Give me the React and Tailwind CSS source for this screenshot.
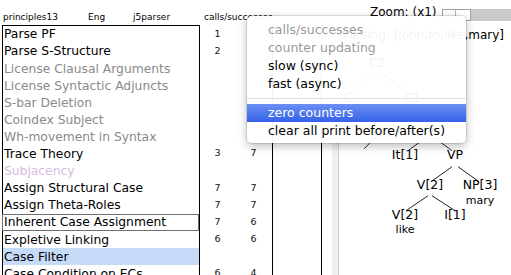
const rows = [
  { t: 'Parse PF', cls: 'text-black', a: '1', b: '' },
  { t: 'Parse S-Structure', cls: 'text-black', a: '2', b: '' },
  { t: 'License Clausal Arguments', cls: 'text-[#8a8a8a]', a: '', b: '' },
  { t: 'License Syntactic Adjuncts', cls: 'text-[#8a8a8a]', a: '', b: '' },
  { t: 'S-bar Deletion', cls: 'text-[#8a8a8a]', a: '', b: '' },
  { t: 'Coindex Subject', cls: 'text-[#8a8a8a]', a: '', b: '' },
  { t: 'Wh-movement in Syntax', cls: 'text-[#8a8a8a]', a: '', b: '' },
  { t: 'Trace Theory', cls: 'text-black', a: '3', b: '7' },
  { t: 'Subjacency', cls: 'text-[#d7bbdf]', a: '', b: '' },
  { t: 'Assign Structural Case', cls: 'text-black', a: '7', b: '7' },
  { t: 'Assign Theta-Roles', cls: 'text-black', a: '7', b: '7' },
  { t: 'Inherent Case Assignment', cls: 'text-black -ml-px border border-[#707070]', a: '7', b: '6' },
  { t: 'Expletive Linking', cls: 'text-black', a: '6', b: '6' },
  { t: 'Case Filter', cls: 'text-black bg-[#c6dbf8]', a: '', b: '' },
  { t: 'Case Condition on ECs', cls: 'text-black', a: '6', b: '4' },
];

// tree labels, canvas coords (centre)
const nodes = [
  { t: 'It[1]', cls: 'left-[66px] top-[130px] text-[12.5px]' },
  { t: 'VP', cls: 'left-[116px] top-[130px] text-[12.5px]' },
  { t: 'V[2]', cls: 'left-[91px] top-[160px] text-[12.5px]' },
  { t: 'NP[3]', cls: 'left-[141px] top-[160px] text-[12.5px]' },
  { t: 'mary', cls: 'left-[141px] top-[175px] text-[11px]' },
  { t: 'V[2]', cls: 'left-[66px] top-[190px] text-[12.5px]' },
  { t: 'like', cls: 'left-[66px] top-[204px] text-[11px]' },
  { t: 'I[1]', cls: 'left-[116px] top-[190px] text-[12.5px]' },
  // mostly hidden behind the menu
  { t: 'C2', cls: 'left-[38px] top-[38px] text-[12.5px]' },
  { t: 'C', cls: 'left-[9px] top-[73px] text-[12.5px]' },
  { t: 'C1', cls: 'left-[73px] top-[73px] text-[12.5px]' },
  { t: 'I2', cls: 'left-[91px] top-[100px] text-[12.5px]' },
];

const edges = [
  [34, 45, 11, 65], [44, 45, 69, 65],
  [66, 80, 25, 120], [78, 80, 89, 93],
  [88, 108, 69, 122], [94, 108, 113, 122],
  [113, 138, 92, 153], [119, 138, 140, 153],
  [89, 167, 67, 182], [93, 167, 116, 182],
];

function Menu() {
  return (
    <div className="absolute left-[247px] top-[16px] z-10 w-[219px] rounded-[5px] bg-white/[0.95] pt-[5px] pb-[3px] text-[12.5px] leading-none shadow-[0_3px_10px_rgba(0,0,0,0.28)] ring-1 ring-black/10">
      <div className="flex h-[18px] items-center pl-[21px] text-[#9a9a9a]">calls/successes</div>
      <div className="flex h-[18px] items-center pl-[21px] text-[#9a9a9a]">counter updating</div>
      <div className="flex h-[18px] items-center pl-[21px] text-black">slow (sync)</div>
      <div className="flex h-[18px] items-center pl-[21px] text-black">fast (async)</div>
      <div className="flex h-[11px] items-center">
        <div className="h-px w-full bg-[#e0e0e0]" />
      </div>
      <div className="flex h-[18px] items-center bg-linear-to-b from-[#6c8ff2] to-[#3461e9] pl-[21px] text-white">zero counters</div>
      <div className="flex h-[18px] items-center pl-[21px] text-black">clear all print before/after(s)</div>
    </div>
  );
}

export default function App() {
  return (
    <div className="relative flex h-[275px] w-[511px] flex-col overflow-hidden bg-white font-['DejaVu_Sans',sans-serif] text-black">
      {/* header */}
      <div className="flex h-[25px] shrink-0">
        <div className="flex pl-[3px] pt-[12px] text-[9px] leading-[10px] whitespace-nowrap">
          <span className="w-[85px]">principles13</span>
          <span className="w-[45px]">Eng</span>
          <span className="w-[71px]">j5parser</span>
          <span className="w-[166px] overflow-hidden">calls/successes</span>
        </div>
        <div className="flex flex-1 pt-[6px]">
          <span className="text-[12px] leading-[12px] whitespace-nowrap">Zoom: (x1)</span>
          <div className="ml-[5px] mt-[3px] flex h-[12px] flex-1">
            <div className="flex w-[29px] border border-[#a0a0a0] bg-white">
              <div className="w-[13px] border-r border-[#b5b5b5]" />
            </div>
            <div className="flex-1 bg-[#c9c9c9]" />
          </div>
        </div>
      </div>

      {/* body */}
      <div className="flex flex-1">
        <div className="ml-[2px] w-[198px] shrink-0 border-x border-t border-black">
          {rows.map((r, i) => (
            <div key={i} className={`flex h-[17.1px] items-center pl-[1px] text-[12.3px] leading-none whitespace-nowrap ${r.cls}`}>
              {r.t}
            </div>
          ))}
        </div>
        <div className="w-[35px] shrink-0">
          {rows.map((r, i) => (
            <div key={i} className="flex h-[17.1px] items-center justify-center text-[9.5px] leading-none text-[#111]">{r.a}</div>
          ))}
        </div>
        <div className="w-[37px] shrink-0">
          {rows.map((r, i) => (
            <div key={i} className="flex h-[17.1px] items-center justify-center text-[9.5px] leading-none text-[#111]">{r.b}</div>
          ))}
        </div>
        <div className="w-[50px] shrink-0 border-x border-black" />
        <div className="w-[10px] shrink-0" />
        <div className="w-[6px] shrink-0 bg-[#f0f0f0]" />

        {/* tree canvas */}
        <div className="relative flex-1 border-l border-[#d4d4d4]">
          <div className="absolute left-[3px] top-[4px] text-[12px] leading-[12px] whitespace-nowrap">Parsing: [john,to,like,mary]</div>
          <svg className="absolute inset-0 h-full w-full" viewBox="0 0 172 250" width="172" height="250">
            {edges.map(([x1, y1, x2, y2], i) => (
              <line key={i} x1={x1} y1={y1} x2={x2} y2={y2} stroke="#222" strokeWidth="1" />
            ))}
          </svg>
          {nodes.map((n, i) => (
            <div key={i} className={`absolute -translate-x-1/2 -translate-y-1/2 leading-none whitespace-nowrap ${n.cls}`}>{n.t}</div>
          ))}
        </div>
      </div>

      <Menu />
    </div>
  );
}
